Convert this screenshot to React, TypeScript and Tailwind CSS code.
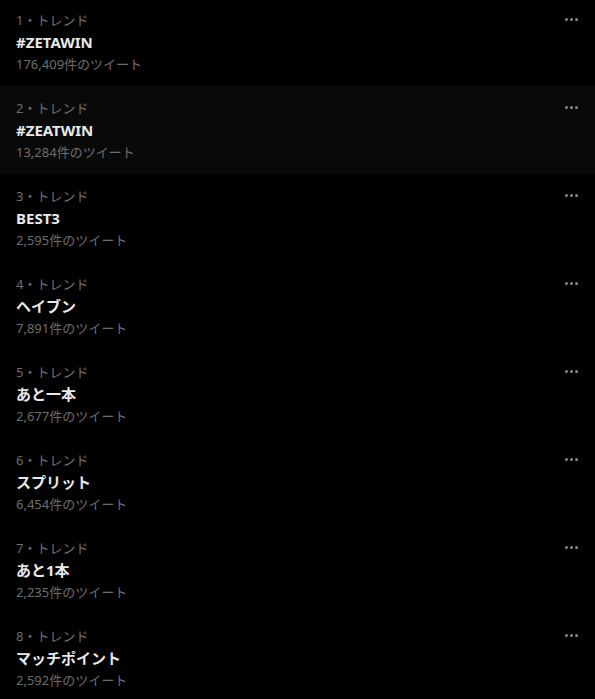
import React from "react";

const trends = [
  { title: "#ZETAWIN", count: "176,409" },
  { title: "#ZEATWIN", count: "13,284" },
  { title: "BEST3", count: "2,595" },
  { title: "ヘイブン", count: "7,891" },
  { title: "あと一本", count: "2,677" },
  { title: "スプリット", count: "6,454" },
  { title: "あと1本", count: "2,235" },
  { title: "マッチポイント", count: "2,592" },
];

export default function App() {
  return (
    <div
      className="h-[699px] w-[595px] overflow-hidden bg-black"
      style={{ fontFamily: '"Noto Sans", "Noto Sans CJK JP", sans-serif' }}
    >
      <div className="-mt-[2px]">
        {trends.map((t, i) => (
          <TrendRow key={i} rank={i + 1} title={t.title} count={t.count} hover={i === 1} />
        ))}
      </div>
    </div>
  );
}

function TrendRow({ rank, title, count, hover }: { rank: number; title: string; count: string; hover?: boolean }) {
  return (
    <div className={`relative h-[88px] px-4 pt-[14px] ${hover ? "bg-[#090909]" : ""}`}>
      <div className="text-[13px] leading-4 text-[#6e6e6e]">{rank}・トレンド</div>
      <div className="mt-1 text-[15px] font-bold leading-5 text-[#e7e9ea]">{title}</div>
      <div className="mt-[2px] text-[13px] leading-5 text-[#6e6e6e]">{count}件のツイート</div>
      <div className="absolute right-[17px] top-[20px] flex gap-[2px]">
        <span className="h-[3px] w-[3px] rounded-full bg-[#8a8a8a]" />
        <span className="h-[3px] w-[3px] rounded-full bg-[#8a8a8a]" />
        <span className="h-[3px] w-[3px] rounded-full bg-[#8a8a8a]" />
      </div>
    </div>
  );
}
